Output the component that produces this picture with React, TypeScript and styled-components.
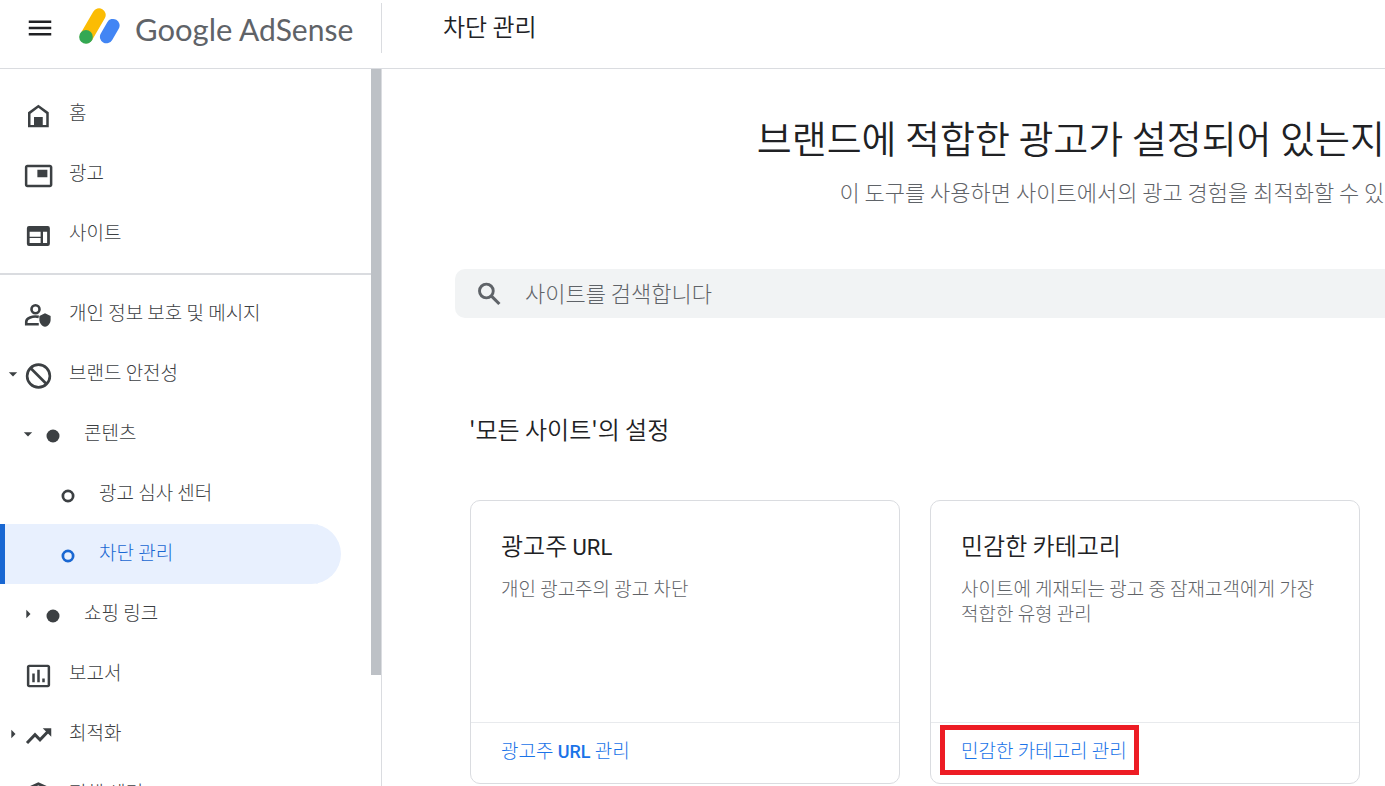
import React from "react";
import styled, { createGlobalStyle } from "styled-components";
import { MdArrowDropDown, MdArrowRight, MdMenu } from "react-icons/md";

const GlobalStyle = createGlobalStyle`
  *, *::before, *::after { box-sizing: border-box; }
  body {
    margin: 0;
    background: #fff;
    color: #202124;
    font-family: "Noto Sans CJK KR", sans-serif;
    font-weight: 300;
  }
  h1, h2, h3, p, ul { margin: 0; padding: 0; font-weight: 350; }
  p { font-weight: 300; }
  ul { list-style: none; font-weight: 300; }
`;

const Shell = styled.div`
  display: flex;
  flex-direction: column;
  height: 100vh;
  overflow: hidden;
`;

const Header = styled.header`
  display: flex;
  align-items: flex-start;
  flex: none;
  height: 69px;
  border-bottom: 1px solid #dadce0;
`;

const Brand = styled.div`
  display: flex;
  align-items: center;
  width: 382px;
  height: 50px;
  margin-top: 3px;
  padding-left: 25px;
  border-right: 1px solid #dadce0;
`;

const MenuButton = styled.button`
  display: flex;
  padding: 0;
  border: 0;
  background: none;
  color: #202124;
  cursor: pointer;
`;

const LogoLink = styled.a`
  display: flex;
  align-items: center;
  gap: 15px;
  height: 50px;
  margin-left: 24px;
  padding-bottom: 4px;
  color: #5f6368;
  font-family: Lato, sans-serif;
  font-size: 30px;
  line-height: 36px;
  font-weight: 400;
  text-decoration: none;
  white-space: nowrap;
`;

const LogoText = styled.span`
  padding-top: 6px;
`;

const LogoName = styled.span`
  font-size: 31px;
`;

const HeaderTitle = styled.h1`
  padding: 11px 0 0 61px;
  font-size: 24px;
  line-height: 30px;
`;

const Body = styled.div`
  display: flex;
  flex: 1;
  min-height: 0;
`;

const Sidebar = styled.aside`
  display: flex;
  flex: none;
  width: 382px;
  border-right: 1px solid #dadce0;
`;

const Nav = styled.nav`
  flex: 1;
  padding-top: 15px;
  overflow: hidden;
`;

const ScrollTrack = styled.div`
  flex: none;
  width: 10px;
`;

const ScrollThumb = styled.div`
  height: calc(100% - 111px);
  background: #bdc1c6;
`;

const Divider = styled.hr`
  height: 2px;
  margin: 9px 0;
  border: 0;
  background: #dadce0;
`;

const NavLink = styled.a<{ $level: number; $active?: boolean }>`
  display: flex;
  align-items: center;
  height: 60px;
  margin-right: 30px;
  padding-left: ${(p) => p.$level * 15}px;
  border-radius: 0 30px 30px 0;
  background: ${(p) => (p.$active ? "#e8f0fe" : "transparent")};
  box-shadow: ${(p) => (p.$active ? "inset 5px 0 0 #1967d2" : "none")};
  color: ${(p) => (p.$active ? "#1967d2" : "#3c4043")};
  font-size: 19px;
  line-height: 28px;
  text-decoration: none;
  white-space: nowrap;
`;

const Caret = styled.span`
  display: flex;
  justify-content: flex-end;
  width: 23px;
`;

const NavIcon = styled.span`
  display: flex;
  align-items: center;
  justify-content: center;
  width: 30px;
  height: 30px;
  margin: 4px 16px 0 0;
`;

const NavLabel = styled.span`
  padding-bottom: 4px;
`;

const Main = styled.main`
  flex: 1;
  min-width: 0;
  overflow: hidden;
`;

const Content = styled.div`
  min-width: 1526px;
  padding: 43px 73px 0;
`;

const Headline = styled.h2`
  font-size: 38px;
  line-height: 50px;
  text-align: center;
  white-space: nowrap;
`;

const Lead = styled.p`
  margin-top: 14px;
  color: #5f6368;
  font-size: 22px;
  line-height: 30px;
  text-align: center;
  white-space: nowrap;
`;

const SearchBox = styled.label`
  display: flex;
  align-items: center;
  gap: 21px;
  height: 49px;
  margin-top: 63px;
  padding-left: 19px;
  border-radius: 10px;
  background: #f1f3f4;
  color: #5f6368;
`;

const SearchInput = styled.input`
  flex: 1;
  height: 49px;
  padding: 0 0 4px;
  border: 0;
  outline: 0;
  background: none;
  color: #202124;
  font: inherit;
  font-size: 22px;
  &::placeholder { color: #5f6368; opacity: 1; }
`;

const SectionTitle = styled.h2`
  margin: 96px 14px 56px;
  font-size: 24px;
  line-height: 30px;
`;

const Cards = styled.div`
  display: grid;
  grid-template-columns: repeat(3, 1fr);
  gap: 30px;
  padding: 0 15px;
`;

const Card = styled.section`
  display: flex;
  flex-direction: column;
  min-height: 284px;
  border: 1px solid #dadce0;
  border-radius: 10px;
`;

const CardBody = styled.div`
  flex: 1;
  padding: 29px 30px 0;
`;

const CardTitle = styled.h3`
  font-size: 24px;
  line-height: 30px;
`;

const CardText = styled.p`
  margin-top: 15px;
  color: #5f6368;
  font-size: 19px;
  line-height: 25px;
  word-break: keep-all;
`;

const CardFooter = styled.div`
  display: flex;
  align-items: center;
  height: 61px;
  padding: 0 30px 7px;
  border-top: 1px solid #e8eaed;
`;

const CardLink = styled.a`
  position: relative;
  color: #1a73e8;
  font-size: 19px;
  line-height: 28px;
  text-decoration: none;
`;

const Latin = styled.span<{ $size: number; $weight: number }>`
  font-family: Roboto, sans-serif;
  font-size: ${(p) => p.$size}px;
  font-weight: ${(p) => p.$weight};
  line-height: 1;
`;

const Highlight = styled.span`
  position: absolute;
  inset: -11px -12px -11px -21px;
  border: 5px solid #ed1c24;
  pointer-events: none;
`;

const AdSenseMark = () => (
  <svg width="41" height="36" viewBox="0 0 41 36" aria-hidden="true">
    <path d="M20 7 7.5 28.5" stroke="#fbbc04" strokeWidth="13.4" strokeLinecap="round" />
    <path d="M34 17.5 27.5 28.7" stroke="#4285f4" strokeWidth="13.2" strokeLinecap="round" />
    <circle cx="7" cy="28.9" r="6.8" fill="#34a853" />
  </svg>
);

const Glyph = ({ children }: { children: React.ReactNode }) => (
  <svg width="30" height="30" viewBox="0 0 24 24" fill="currentColor" aria-hidden="true">
    {children}
  </svg>
);

const HomeIcon = () => (
  <Glyph>
    <path
      fillRule="evenodd"
      d="M4 21V9l8.3-6 8.3 6v12H4zM6 19.2h2.8v-6.5h7v6.5h2.8v-9.1l-6.3-4.7L6 10.1v9.1z"
    />
  </Glyph>
);

const AdsIcon = () => (
  <Glyph>
    <path d="M19.5 7h-8v6h8V7zm2-4h-18c-1.1 0-2 .9-2 2v14c0 1.1.9 2 2 2h18c1.1 0 2-.9 2-2V5c0-1.1-.9-2-2-2zm0 16h-18V5h18v14z" />
  </Glyph>
);

const SitesIcon = () => (
  <Glyph>
    <path
      fillRule="evenodd"
      d="M4.8 4h15A1.8 1.8 0 0 1 21.5 5.8v12.4a1.8 1.8 0 0 1-1.7 1.8h-15a1.8 1.8 0 0 1-1.7-1.8V5.8A1.8 1.8 0 0 1 4.8 4zM5.3 8.6v3.9h8.8V8.6zM5.3 13.6v4h8.8v-4zM16 8.6v9h3.3v-9z"
    />
  </Glyph>
);

const PrivacyIcon = () => (
  <Glyph>
    <circle cx="10" cy="6.6" r="3.2" fill="none" stroke="currentColor" strokeWidth="2.1" />
    <path d="M12.6 12.7c-5-1-10 .9-10 3.8v2.1h10" fill="none" stroke="currentColor" strokeWidth="2.1" />
    <path d="M17.6 9.8l4.5 2.1v3c0 2.8-1.9 5-4.5 5.7-2.6-.7-4.5-2.9-4.5-5.7v-3z" />
  </Glyph>
);

const BlockIcon = () => (
  <Glyph>
    <circle cx="12.4" cy="12" r="9.1" fill="none" stroke="currentColor" strokeWidth="2.1" />
    <path d="M6 5.6 18.8 18.4" stroke="currentColor" strokeWidth="2.1" />
  </Glyph>
);

const ReportIcon = () => (
  <Glyph>
    <path d="M9.4 17h-2v-7h2v7zm4 0h-2V7h2v10zm4 0h-2v-3h2v3zm2.3 2.2H5.1V4.8h14.6v14.4zM19.9 3h-15c-1 0-1.8.8-1.8 1.8v14.4c0 1 .8 1.8 1.8 1.8h15c1 0 1.8-.8 1.8-1.8V4.8c0-1-.8-1.8-1.8-1.8z" />
  </Glyph>
);

const TrendIcon = () => (
  <Glyph>
    <path d="M3.2 17.6 9.6 11l4 4 6.4-6.6" fill="none" stroke="currentColor" strokeWidth="2.4" />
    <path d="M15.8 5.8h6.8v6.8z" />
  </Glyph>
);

const PolicyIcon = () => (
  <Glyph>
    <path
      d="M12.3 2.3 4.3 5.8v5.3c0 4.9 3.4 9.4 8 10.6 4.6-1.2 8-5.7 8-10.6V5.8z"
      fill="none"
      stroke="currentColor"
      strokeWidth="2.2"
    />
    <circle cx="12.3" cy="12" r="3" fill="none" stroke="currentColor" strokeWidth="2" />
  </Glyph>
);

const SearchIcon = () => (
  <Glyph>
    <circle cx="9.9" cy="9.6" r="5.5" fill="none" stroke="currentColor" strokeWidth="2.3" />
    <path d="M13.8 13.5 20.3 20" stroke="currentColor" strokeWidth="2.5" />
  </Glyph>
);

const DotIcon = () => (
  <Glyph>
    <circle cx="12" cy="12" r="5.2" />
  </Glyph>
);

const RingIcon = () => (
  <Glyph>
    <circle cx="12" cy="12" r="4.1" fill="none" stroke="currentColor" strokeWidth="2.2" />
  </Glyph>
);

type Item = {
  label: string;
  icon: React.ReactNode;
  level?: number;
  caret?: "open" | "closed";
  active?: boolean;
};

const mainItems: Item[] = [
  { label: "홈", icon: <HomeIcon /> },
  { label: "광고", icon: <AdsIcon /> },
  { label: "사이트", icon: <SitesIcon /> },
];

const toolItems: Item[] = [
  { label: "개인 정보 보호 및 메시지", icon: <PrivacyIcon /> },
  { label: "브랜드 안전성", icon: <BlockIcon />, caret: "open" },
  { label: "콘텐츠", icon: <DotIcon />, level: 1, caret: "open" },
  { label: "광고 심사 센터", icon: <RingIcon />, level: 2 },
  { label: "차단 관리", icon: <RingIcon />, level: 2, active: true },
  { label: "쇼핑 링크", icon: <DotIcon />, level: 1, caret: "closed" },
  { label: "보고서", icon: <ReportIcon /> },
  { label: "최적화", icon: <TrendIcon />, caret: "closed" },
  { label: "정책 센터", icon: <PolicyIcon /> },
];

const NavList = ({ items }: { items: Item[] }) => (
  <ul>
    {items.map((item) => (
      <li key={item.label}>
        <NavLink
          href="#"
          $level={item.level ?? 0}
          $active={item.active}
          aria-current={item.active ? "page" : undefined}
        >
          <Caret>
            {item.caret === "open" && <MdArrowDropDown size={20} />}
            {item.caret === "closed" && <MdArrowRight size={20} />}
          </Caret>
          <NavIcon>{item.icon}</NavIcon>
          <NavLabel>{item.label}</NavLabel>
        </NavLink>
      </li>
    ))}
  </ul>
);

export default function App() {
  return (
    <Shell>
      <GlobalStyle />
      <Header>
        <Brand>
          <MenuButton type="button" aria-label="메뉴">
            <MdMenu size={30} />
          </MenuButton>
          <LogoLink href="#">
            <AdSenseMark />
            <LogoText>
              <LogoName>Google</LogoName> AdSense
            </LogoText>
          </LogoLink>
        </Brand>
        <HeaderTitle>차단 관리</HeaderTitle>
      </Header>
      <Body>
        <Sidebar>
          <Nav>
            <NavList items={mainItems} />
            <Divider />
            <NavList items={toolItems} />
          </Nav>
          <ScrollTrack>
            <ScrollThumb />
          </ScrollTrack>
        </Sidebar>
        <Main>
          <Content>
            <Headline>브랜드에 적합한 광고가 설정되어 있는지 확인하기</Headline>
            <Lead>이 도구를 사용하면 사이트에서의 광고 경험을 최적화할 수 있습니다.</Lead>
            <SearchBox>
              <SearchIcon />
              <SearchInput type="search" placeholder="사이트를 검색합니다" aria-label="사이트 검색" />
            </SearchBox>
            <SectionTitle>'모든 사이트'의 설정</SectionTitle>
            <Cards>
              <Card>
                <CardBody>
                  <CardTitle>
                    광고주 <Latin $size={22} $weight={400}>URL</Latin>
                  </CardTitle>
                  <CardText>개인 광고주의 광고 차단</CardText>
                </CardBody>
                <CardFooter>
                  <CardLink href="#">
                    광고주 <Latin $size={18} $weight={500}>URL</Latin> 관리
                  </CardLink>
                </CardFooter>
              </Card>
              <Card>
                <CardBody>
                  <CardTitle>민감한 카테고리</CardTitle>
                  <CardText>사이트에 게재되는 광고 중 잠재고객에게 가장 적합한 유형 관리</CardText>
                </CardBody>
                <CardFooter>
                  <CardLink href="#">
                    민감한 카테고리 관리
                    <Highlight />
                  </CardLink>
                </CardFooter>
              </Card>
            </Cards>
          </Content>
        </Main>
      </Body>
    </Shell>
  );
}
